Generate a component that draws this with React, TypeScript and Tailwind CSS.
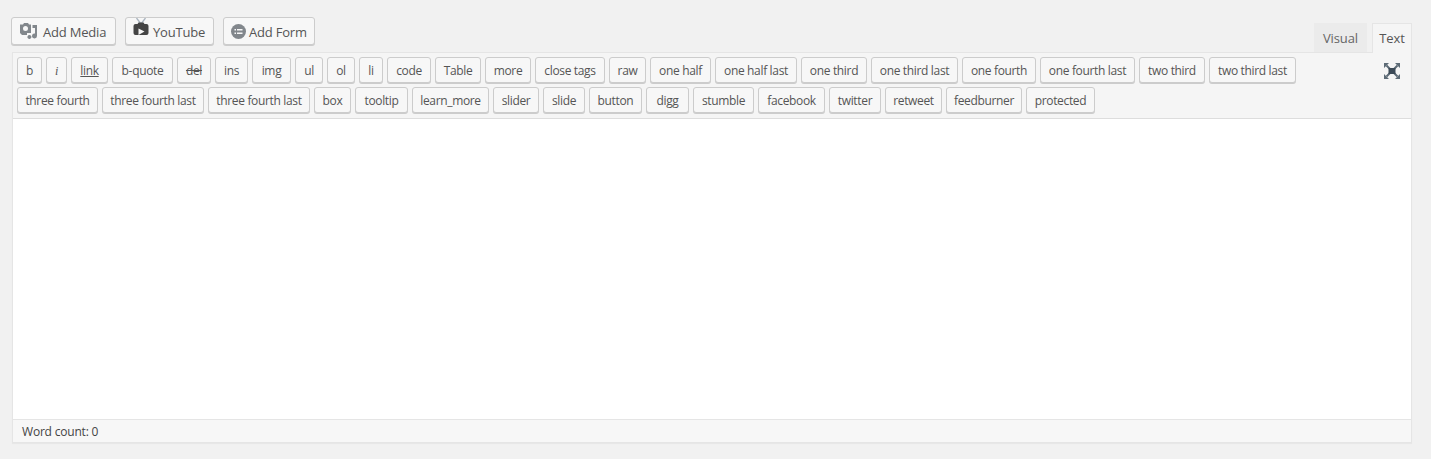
import React from 'react';

const row1 = [
  { label: 'b', w: 'w-[25px]' },
  { label: 'i', w: 'w-[21px]' },
  { label: 'link', w: 'w-[37px]' },
  { label: 'b-quote', w: 'w-[61px]' },
  { label: 'del', w: 'w-[34px]' },
  { label: 'ins', w: 'w-[33px]' },
  { label: 'img', w: 'w-[39px]' },
  { label: 'ul', w: 'w-[28px]' },
  { label: 'ol', w: 'w-[28px]' },
  { label: 'li', w: 'w-[24px]' },
  { label: 'code', w: 'w-[44px]' },
  { label: 'Table', w: 'w-[46px]' },
  { label: 'more', w: 'w-[46px]' },
  { label: 'close tags', w: 'w-[70px]' },
  { label: 'raw', w: 'w-[37px]' },
  { label: 'one half', w: 'w-[61px]' },
  { label: 'one half last', w: 'w-[82px]' },
  { label: 'one third', w: 'w-[66px]' },
  { label: 'one third last', w: 'w-[87px]' },
  { label: 'one fourth', w: 'w-[74px]' },
  { label: 'one fourth last', w: 'w-[95px]' },
  { label: 'two third', w: 'w-[66px]' },
  { label: 'two third last', w: 'w-[87px]' },
];

const row2 = [
  { label: 'three fourth', w: 'w-[81px]' },
  { label: 'three fourth last', w: 'w-[102px]' },
  { label: 'three fourth last', w: 'w-[102px]' },
  { label: 'box', w: 'w-[37px]' },
  { label: 'tooltip', w: 'w-[53px]' },
  { label: 'learn_more', w: 'w-[77px]' },
  { label: 'slider', w: 'w-[46px]' },
  { label: 'slide', w: 'w-[42px]' },
  { label: 'button', w: 'w-[53px]' },
  { label: 'digg', w: 'w-[43px]' },
  { label: 'stumble', w: 'w-[61px]' },
  { label: 'facebook', w: 'w-[67px]' },
  { label: 'twitter', w: 'w-[52px]' },
  { label: 'retweet', w: 'w-[57px]' },
  { label: 'feedburner', w: 'w-[76px]' },
  { label: 'protected', w: 'w-[69px]' },
];

function MediaButton({ icon, label, className = '' }: { icon: React.ReactNode; label: string; className?: string }) {
  return (
    <button className={`flex h-[28px] items-center whitespace-nowrap rounded-[3px] border border-[#cccccc] bg-[#f7f7f7] pl-[7px] text-[13px] tracking-[-0.2px] text-[#555555] shadow-[0_1px_0_#cccccc] ${className}`}>
      {icon}
      <span className="pt-[3px]">{label}</span>
    </button>
  );
}

function QuickTag({ label, w }: { label: string; w: string }) {
  let text = 'text-[#555555]';
  if (label === 'i') text = 'italic font-["Liberation_Serif",serif] text-[#555555]';
  if (label === 'link') text = 'underline text-[#555555]';
  if (label === 'del') text = 'line-through text-[#555555]';
  return (
    <button className={`h-[26px] whitespace-nowrap rounded-[3px] border border-[#cccccc] bg-[#f7f7f7] pt-[2px] text-center text-[12px] leading-[22px] tracking-[-0.34px] shadow-[0_1px_0_#cccccc] ${w} ${text}`}>
      {label}
    </button>
  );
}

function FullscreenIcon() {
  return (
    <svg width="16" height="16" viewBox="0 0 16 16">
      <path d="M2.500 2.500l4 4M13.500 2.500l-4 4M2.500 13.500l4-4M13.500 13.500l-4-4" stroke="#5d6b76" strokeWidth="2" fill="none" />
      <path d="M0 0h5L0 5zM16 0v5l-5-5zM0 16v-5l5 5zM16 16h-5l5-5z" fill="#5d6b76" />
      <rect x="4.500" y="5" width="7" height="6" fill="#3c4a57" />
    </svg>
  );
}

export default function App() {
  return (
    <div className="h-[459px] w-[1431px] overflow-hidden bg-[#f1f1f1] pl-[11px] pt-[17px] font-['Open_Sans',sans-serif]">
      <div className="flex h-[35px] w-[1401px] items-start">
        <div className="flex gap-[9px]">
          <MediaButton
            label="Add Media"
            className="w-[105px]"
            icon={
              <svg className="mr-[5px] shrink-0" width="19" height="18" viewBox="0 0 19 18" fill="#82878c">
                <path d="M1 2.500h3L5 1h4l1 1.500h2V11H8v2H3l-2-2zM6.500 4a2.500 2.500 0 1 0 0 5 2.500 2.500 0 0 0 0-5z" fillRule="evenodd" />
                <path d="M13.500 3H18v11a2.500 2.500 0 1 1-2-2.400V6h-2.500zM10.500 13a2 2 0 1 1-1.600 3.300A2 2 0 0 1 10.500 13z" />
              </svg>
            }
          />
          <MediaButton
            label="YouTube"
            className="w-[89px]"
            icon={
              <svg className="mr-[4px] -mt-[6px] shrink-0" width="16" height="20" viewBox="0 0 16 20">
                <path d="M3.500 0l5 6.500M12.500 0l-5 6.500" stroke="#a9b4bf" strokeWidth="1.300" fill="none" />
                <path d="M2.500 6h2l1-1.500h5L11.500 6h2a2 2 0 0 1 2 2v7a2 2 0 0 1-2 2h-11a2 2 0 0 1-2-2V8a2 2 0 0 1 2-2z" fill="#444444" />
                <path d="M5.500 10.500l6 3-6 3.500z" fill="#f7f7f7" />
              </svg>
            }
          />
          <MediaButton
            label="Add Form"
            className="w-[92px]"
            icon={
              <svg className="mr-[3px] mt-px shrink-0" width="15" height="15" viewBox="0 0 15 15">
                <circle cx="7.500" cy="7.500" r="7.500" fill="#82878c" />
                <path d="M3.500 5h1.500v1.500H3.500zM6 5h5.500v1.500H6zM3.500 8.500h1.500V10H3.500zM6 8.500h5.500V10H6z" fill="#f7f7f7" />
              </svg>
            }
          />
        </div>
        <div className="ml-auto mt-[6px] flex h-[29px] text-[13px] tracking-[-0.1px]">
          <div className="mr-[5px] h-[29px] w-[53px] bg-[#ebebeb] pt-px text-center leading-[29px] text-[#666666]">Visual</div>
          <div className="h-[30px] w-[40px] border-x border-t border-[#e5e5e5] bg-[#f5f5f5] text-center leading-[28px] text-[#555555]">Text</div>
        </div>
      </div>
      <div className="ml-px w-[1400px] border border-[#e5e5e5] shadow-[0_1px_1px_rgba(0,0,0,0.04)]">
        <div className="flex h-[66px] border-b border-[#dddddd] bg-[#f5f5f5] pl-[4px] pt-[4px]">
          <div className="flex w-[1360px] flex-col gap-[4px]">
            <div className="flex gap-[4px]">
              {row1.map((tag, i) => (
                <QuickTag key={i} label={tag.label} w={tag.w} />
              ))}
            </div>
            <div className="flex gap-[4px]">
              {row2.map((tag, i) => (
                <QuickTag key={i} label={tag.label} w={tag.w} />
              ))}
            </div>
          </div>
          <div className="ml-auto mr-[11px] mt-[6px]">
            <FullscreenIcon />
          </div>
        </div>
        <div className="h-[300px] bg-white" />
        <div className="h-[23px] border-t border-[#e5e5e5] bg-[#f7f7f7] pl-[9px] text-[12px] leading-[23px] tracking-[-0.2px] text-[#444444]">
          Word count: 0
        </div>
      </div>
    </div>
  );
}
